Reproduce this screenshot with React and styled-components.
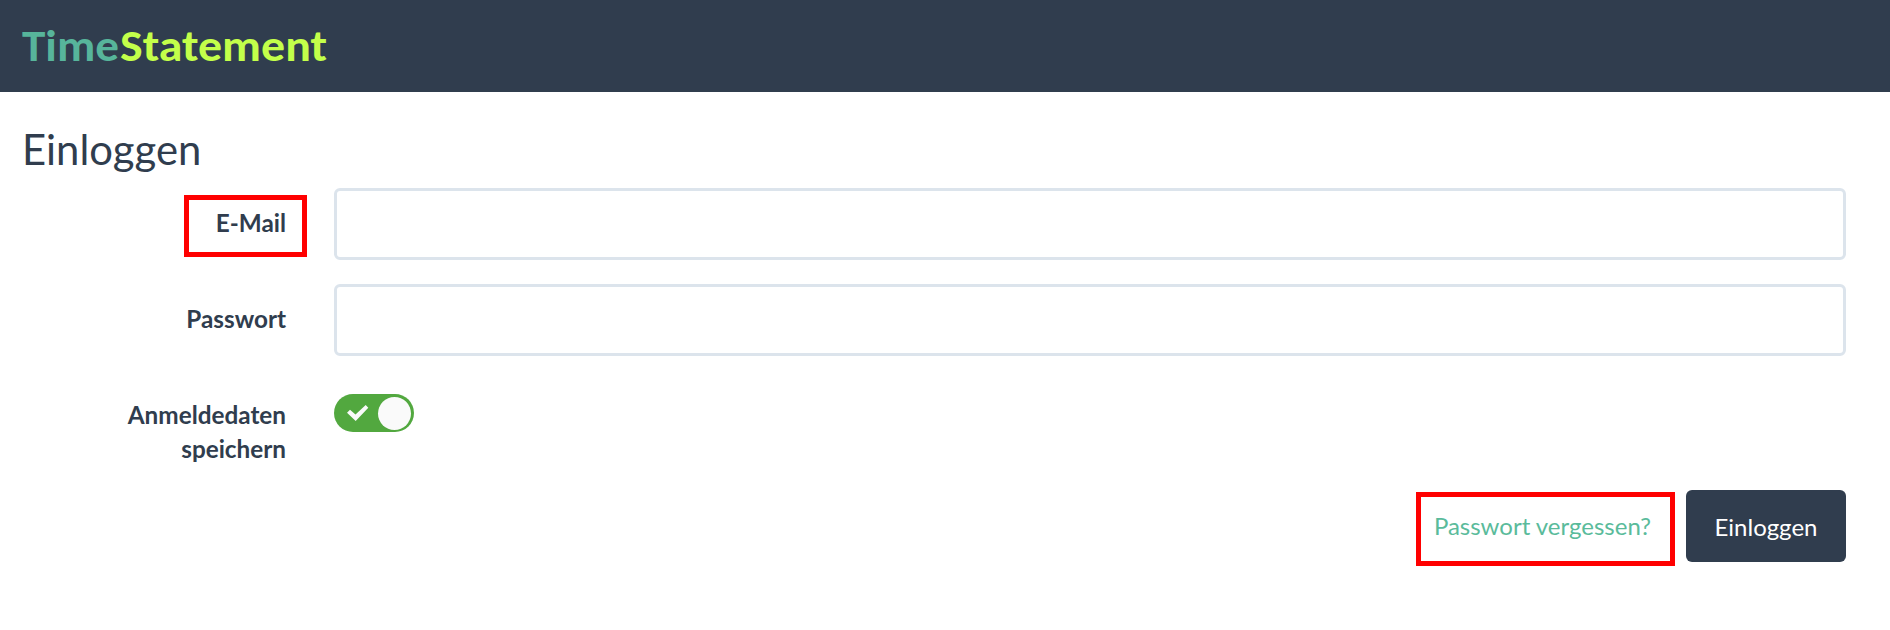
import React, { useState } from "react";
import styled, { createGlobalStyle } from "styled-components";

const GlobalStyle = createGlobalStyle`
    * {
        box-sizing: border-box;
    }

    body {
        margin: 0;
        background-color: #fff;
        color: #303d4e;
        font-family: Lato, "Open Sans", sans-serif;
        font-size: 24px;
        line-height: 34px;
    }
`;

const Page = styled.div`
    min-height: 100vh;
`;

const Header = styled.header`
    height: 92px;
    padding-left: 22px;
    background-color: #303d4e;
`;

const Logo = styled.svg`
    display: block;
    width: 310px;
    height: 92px;
    font-family: Carlito, Lato, sans-serif;
    font-size: 44px;
    font-weight: 700;
`;

const Main = styled.main`
    padding: 36px 44px 0 22px;
`;

const Title = styled.h1`
    margin: 0;
    height: 60px;
    font-size: 41.8px;
    font-weight: 400;
    line-height: 43px;
`;

const Form = styled.form`
    display: flex;
    flex-direction: column;
`;

const Row = styled.div`
    display: grid;
    grid-template-columns: 264px 1fr;
    column-gap: 48px;
    align-items: start;
    height: 96px;
`;

const Label = styled.label`
    padding-top: 18px;
    font-size: 24.3px;
    font-weight: 700;
    text-align: right;
`;

const Input = styled.input`
    width: 100%;
    height: 72px;
    padding: 0 20px;
    border: 3px solid #dce4ec;
    border-radius: 6px;
    outline: none;
    color: inherit;
    font: inherit;
`;

const Switch = styled.button`
    display: flex;
    align-items: center;
    justify-content: ${(props) => (props.$on ? "flex-end" : "flex-start")};
    width: 80px;
    height: 38px;
    margin-top: 14px;
    padding: 0 3px;
    border: none;
    border-radius: 19px;
    background-color: ${(props) => (props.$on ? "#52a83f" : "#b4bcc2")};
    cursor: pointer;
`;

const Check = styled.svg`
    width: 22px;
    height: 18px;
    margin-right: 9px;
    fill: #fafafa;
`;

const Knob = styled.span`
    width: 33px;
    height: 33px;
    border-radius: 50%;
    background-color: #fafafa;
`;

const Actions = styled.div`
    display: flex;
    justify-content: flex-end;
    gap: 35px;
    padding-top: 14px;
`;

const Link = styled.a`
    padding-top: 19px;
    color: #5abb9b;
    text-decoration: none;
`;

const Submit = styled.button`
    width: 160px;
    height: 72px;
    padding: 2px 0 0;
    border: none;
    border-radius: 6px;
    background-color: #303d4e;
    color: #fff;
    font: inherit;
    cursor: pointer;
`;

const Marked = styled.span`
    position: relative;
`;

// Roter Rahmen, liegt über dem markierten Text
const Mark = styled.span`
    position: absolute;
    top: ${(props) => props.$top}px;
    right: ${(props) => props.$right}px;
    width: ${(props) => props.$width}px;
    height: ${(props) => props.$height}px;
    border: 5px solid #ff0000;
    pointer-events: none;
`;

const App = () => {
    const [email, setEmail] = useState("");
    const [password, setPassword] = useState("");
    const [remember, setRemember] = useState(true);

    const handleSubmit = (e) => {
        e.preventDefault();
    };

    return (
        <Page>
            <GlobalStyle />
            <Header>
                <Logo>
                    <text x="0" y="60.5" fill="#57b59b" textLength="97" lengthAdjust="spacingAndGlyphs">Time</text>
                    <text x="98" y="60.5" fill="#c3ff4a" textLength="207" lengthAdjust="spacingAndGlyphs">Statement</text>
                </Logo>
            </Header>
            <Main>
                <Title>Einloggen</Title>
                <Form onSubmit={handleSubmit}>
                    <Row>
                        <Label htmlFor="email">
                            <Marked>
                                E-Mail
                                <Mark $top={-13} $right={-21} $width={123} $height={62} />
                            </Marked>
                        </Label>
                        <Input id="email" type="email" value={email} onChange={(e) => setEmail(e.target.value)} />
                    </Row>
                    <Row>
                        <Label htmlFor="password">Passwort</Label>
                        <Input id="password" type="password" value={password} onChange={(e) => setPassword(e.target.value)} />
                    </Row>
                    <Row>
                        <Label>Anmeldedaten speichern</Label>
                        <Switch type="button" $on={remember} onClick={() => setRemember(!remember)}>
                            {remember && (
                                <Check viewBox="13 10 22 18">
                                    <path d="M13 18.7 16 15.7 21.5 20.5 31.7 11 34.3 13.7 21.7 27Z" />
                                </Check>
                            )}
                            <Knob />
                        </Switch>
                    </Row>
                    <Actions>
                        <Link href="#">
                            <Marked>
                                Passwort vergessen?
                                <Mark $top={-19} $right={-24} $width={259} $height={74} />
                            </Marked>
                        </Link>
                        <Submit type="submit">Einloggen</Submit>
                    </Actions>
                </Form>
            </Main>
        </Page>
    );
};

export default App;
